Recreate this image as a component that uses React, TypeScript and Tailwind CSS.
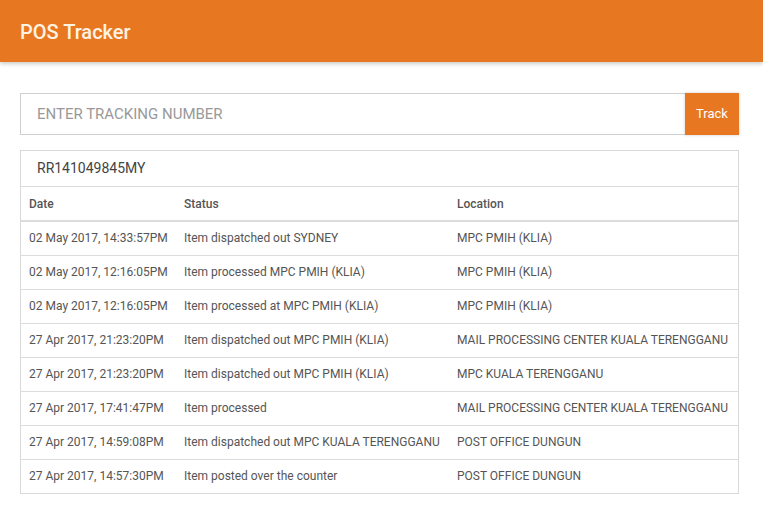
const rows = [
  ["02 May 2017, 14:33:57PM", "Item dispatched out SYDNEY", "MPC PMIH (KLIA)"],
  ["02 May 2017, 12:16:05PM", "Item processed MPC PMIH (KLIA)", "MPC PMIH (KLIA)"],
  ["02 May 2017, 12:16:05PM", "Item processed at MPC PMIH (KLIA)", "MPC PMIH (KLIA)"],
  ["27 Apr 2017, 21:23:20PM", "Item dispatched out MPC PMIH (KLIA)", "MAIL PROCESSING CENTER KUALA TERENGGANU"],
  ["27 Apr 2017, 21:23:20PM", "Item dispatched out MPC PMIH (KLIA)", "MPC KUALA TERENGGANU"],
  ["27 Apr 2017, 17:41:47PM", "Item processed", "MAIL PROCESSING CENTER KUALA TERENGGANU"],
  ["27 Apr 2017, 14:59:08PM", "Item dispatched out MPC KUALA TERENGGANU", "POST OFFICE DUNGUN"],
  ["27 Apr 2017, 14:57:30PM", "Item posted over the counter", "POST OFFICE DUNGUN"],
];

export default function App() {
  return (
    <div className="min-h-[512px] bg-white font-['Roboto',sans-serif]">
      <header className="h-[62px] bg-[#e87722] flex items-center px-5 pt-[2px] shadow-[0_2px_4px_rgba(0,0,0,0.2)]">
        <h1 className="text-[20px] font-medium text-[#fff3e3]">POS Tracker</h1>
      </header>
      <main className="pl-5 pr-6 pt-[31px]">
        <div className="flex h-[42px]">
          <input
            className="flex-1 border border-[#cfcfcf] border-r-0 px-4 text-[15px] text-[#444] placeholder:text-[#999] outline-none"
            placeholder="ENTER TRACKING NUMBER"
          />
          <button className="w-[54px] bg-[#e87722] text-white text-[13px] shadow-[0_0_3px_rgba(0,0,0,0.2)]">
            Track
          </button>
        </div>
        <div className="mt-[15px] border border-[#d9d9d9]">
          <div className="h-[36px] flex items-center px-4 border-b border-[#dcdcdc]">
            <span className="text-[14px] text-[#444]">RR141049845MY</span>
          </div>
          <table className="w-full text-[12px] text-left">
            <thead>
              <tr className="h-[34px] border-b-2 border-[#dcdcdc] text-[#555]">
                <th className="font-medium pl-2 w-[163px]">Date</th>
                <th className="font-medium w-[273px]">Status</th>
                <th className="font-medium">Location</th>
              </tr>
            </thead>
            <tbody className="text-[#555]">
              {rows.map((r, i) => (
                <tr key={i} className={"h-[34px] " + (i < rows.length - 1 ? "border-b border-[#dcdcdc]" : "")}>
                  <td className="pl-2">{r[0]}</td>
                  <td>{r[1]}</td>
                  <td>{r[2]}</td>
                </tr>
              ))}
            </tbody>
          </table>
        </div>
      </main>
    </div>
  );
}
